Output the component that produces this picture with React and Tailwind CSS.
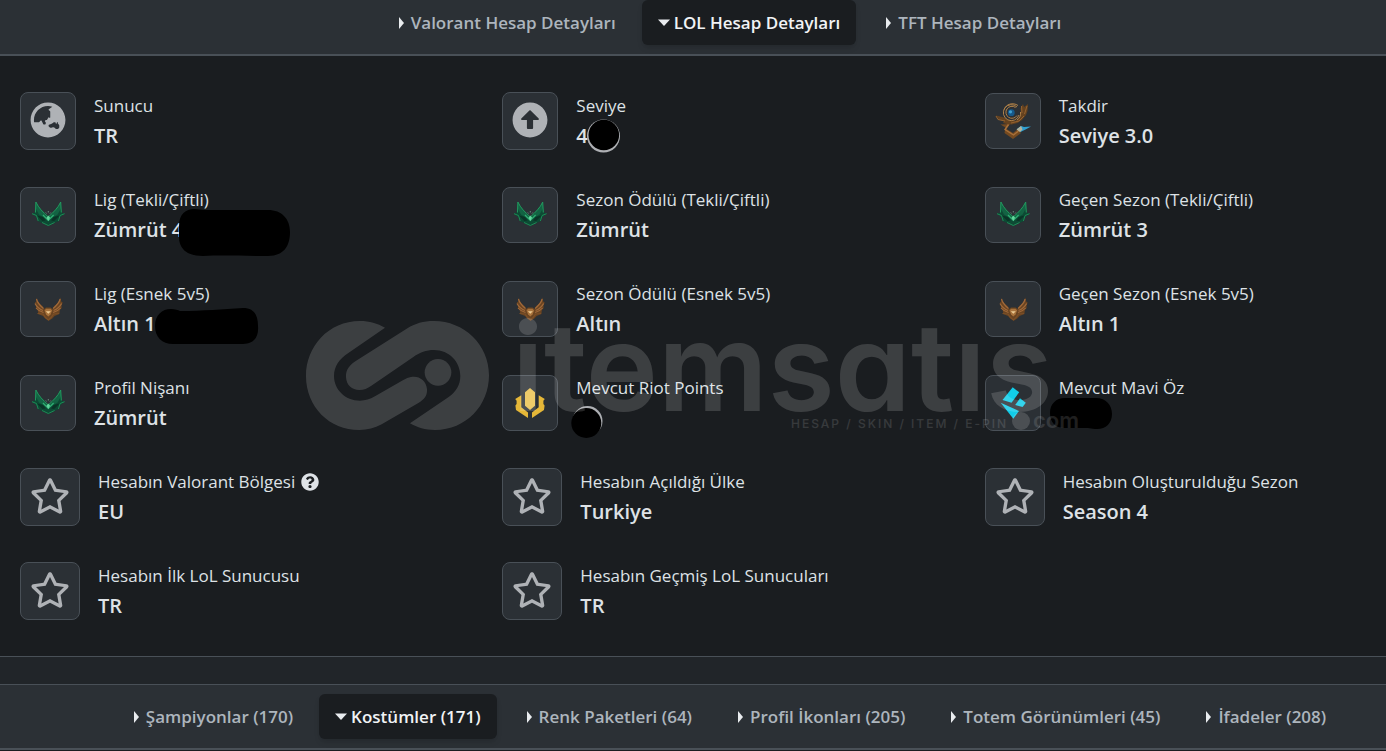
import React from "react";
import { FaGlobeAsia, FaArrowAltCircleUp, FaRegStar, FaQuestionCircle } from "react-icons/fa";

const accountTabs = [
  { label: "Valorant Hesap Detayları" },
  { label: "LOL Hesap Detayları", open: true },
  { label: "TFT Hesap Detayları" },
];

const inventoryTabs = [
  { label: "Şampiyonlar (170)" },
  { label: "Kostümler (171)", open: true },
  { label: "Renk Paketleri (64)" },
  { label: "Profil İkonları (205)" },
  { label: "Totem Görünümleri (45)" },
  { label: "İfadeler (208)" },
];

function Tab({ label, open }) {
  return (
    <button
      type="button"
      aria-expanded={!!open}
      className={
        "flex h-[45px] items-center whitespace-nowrap rounded-md px-4 text-[17px] font-semibold " +
        (open ? "bg-[#1a1d20] text-[#f1f3f5] shadow-md" : "text-[#adb5bd]")
      }
    >
      <svg className="mr-[2px] size-[14px] shrink-0 text-[#e9ecef]" viewBox="0 0 14 14" fill="currentColor" aria-hidden="true">
        {open ? <path d="M0 3.500h12L6 10z" /> : <path d="M4 1v12l5-6z" />}
      </svg>
      {label}
    </button>
  );
}

function Emerald() {
  return (
    <svg viewBox="0 0 36 36" className="size-9" aria-hidden="true">
      <path d="M5.900 5C8.500 11 13 15 18.300 19.500 23.600 15 28.100 11 30.700 5l1.200 10.500 2.600 1.200-4 3.300-2 4.200-5.200 2.200-5 2.600-5-2.600-5.200-2.200-2-4.200L2 16.700l2.700-1.200z" fill="#0d4a34" />
      <path d="M5.900 5C8.500 11 13 15 18.300 20.500l-2 1.500L9 17.500 5.500 11zM30.700 5C28.100 11 23.600 15 18.300 20.500l2 1.500 7.300-4.500 3.500-6.500z" fill="#136343" />
      <path d="M5.900 5C8.500 11 13 15 18.300 20 23.600 15 28.100 11 30.700 5M5.900 5l-.4 10.500M30.700 5l.6 10.500" fill="none" stroke="#229a5f" strokeWidth="1" />
      <path d="M2 16.700l4.500 1.800L8.200 24M34.600 16.700l-4.500 1.800-1.700 5.500M12 25.500l6.300 3 6.300-3" fill="none" stroke="#1d8a55" strokeWidth="1" />
      <path d="M7 18.500l6 1.500 2.500 3.500-3 .5zM29.600 18.500l-6 1.500-2.500 3.500 3 .5z" fill="#0a3326" />
      <path d="M13 18l5.300 5.500L23.600 18" fill="none" stroke="#2fb173" strokeWidth="1.200" />
      <path d="M18.300 18.500l1.800 2.200-1.800 3.300-1.800-3.300z" fill="#62d69c" />
      <path d="M15.800 15.500l.8 1M20.800 15.500l-.8 1M18.300 14v1.500" stroke="#7b9f93" strokeWidth=".8" />
    </svg>
  );
}

function Gold() {
  return (
    <svg viewBox="0 0 36 36" className="size-9" aria-hidden="true">
      <path d="M6 6.500c1 4 3.500 6.500 6.500 8.500l1.500 3 2-1.500h4.600l2 1.500 1.500-3c3-2 5.500-4.500 6.500-8.500l.6 4 1.500 1-1.200 3 .2 2.500-1.800 2-.5 4-4.800 2-2.300 2.500-3.500 2.300-3.500-2.300-2.300-2.500-4.800-2-.5-4-1.800-2 .2-2.500-1.200-3 1.500-1z" fill="#6a4421" />
      <path d="M6.500 8c1 4.500 4 7 7 9.500M30.100 8c-1 4.500-4 7-7 9.500M5 12.500c1.500 3 4.500 5.500 8 7M31.600 12.500c-1.500 3-4.500 5.500-8 7M6 17c2 2.500 4.500 3.500 7.500 4.500M30.600 17c-2 2.500-4.500 3.500-7.500 4.500" fill="none" stroke="#a0693a" strokeWidth="1.200" />
      <path d="M7.500 22.500l5.500.5 2.500 3.500 2.800 2.500 2.800-2.500 2.500-3.500 5.500-.5" fill="none" stroke="#7c4f27" strokeWidth="1.200" />
      <path d="M14.500 19.500l1.500-1.700h4.600l1.500 1.700-1.600 4-2.200 2-2.200-2z" fill="#a9733c" />
      <path d="M15.800 20.200h5l-2.500 2.600z" fill="#eccb93" />
    </svg>
  );
}

function Honor() {
  return (
    <svg viewBox="0 0 36 36" className="size-9" aria-hidden="true">
      <path d="M1 12.500l8 2 5 3 6 .5 4-2.500 2-5-.5-5L28 1l1 3 4-3-.5 7-1.500 4-4 5-4.500 3-6 1.500-5-.5L8 20l1-2-5-1.500z" fill="#65421f" />
      <path d="M1 13l2 3.500 7 1.500M26.500 3l.5 7M32 3l-2.500 8M29 13l-5 5-8 2" fill="none" stroke="#946230" strokeWidth="1" />
      <path d="M24 12a8 8 0 1 1-2-8M20.500 4.500a6 6 0 1 0 1.500 8M9 6.500C11 1 18-1 23 2.500M22 17c3-2 4-5 3.500-8" fill="none" stroke="#b08148" strokeWidth="1" />
      <circle cx="16.300" cy="9.700" r="3.400" fill="#15598b" />
      <circle cx="15.500" cy="8.800" r="1.600" fill="#3f9fd0" />
      <path d="M5.500 21.500l9.500-.5-3.500 5 6.500 4 5-4 3 4-8 6L9.500 30l1-5.500z" fill="#754a20" />
      <path d="M13.500 21.500l-3.500 5 8.500 5.500 5-4" fill="none" stroke="#a9713a" strokeWidth="1.400" />
      <path d="M22 26l4-3 3 1 7-.5-4.500 2.500-6 3z" fill="#2f9fd0" />
      <path d="M21.500 26.500l4.500-3.500 1.500 3.500-2.500 2.500z" fill="#b5b39b" />
    </svg>
  );
}

function RiotPoints() {
  return (
    <svg viewBox="0 0 36 36" className="size-9" fill="#e5b738" aria-hidden="true">
      <path d="M18 3l5 4.200v13.600L18 25l-5-4.200V7.200z" fill="#ebc250" />
      <path d="M9.300 10.300v11.900l6.700 5.300V33L4 25l-.6-4.500L4.600 19v-3.300L3.200 14zM26.700 10.300v11.900L20 27.500V33l12-8 .6-4.500-1.200-1.500v-3.300l1.400-1.700z" />
    </svg>
  );
}

function BlueEssence() {
  return (
    <svg viewBox="0 0 36 36" className="size-9" fill="#11cde9" aria-hidden="true">
      <path d="M17.700 2.300l6.500 5-7.700 10.400L7.500 15z" />
      <path d="M25 13.300l5.800 4.400-3.200 4.300-7.400-2z" />
      <path d="M5.700 17.700L24 26l-5.700 7.800z" />
    </svg>
  );
}

const Globe = () => <FaGlobeAsia className="size-9" />;
const Level = () => <FaArrowAltCircleUp className="size-9" />;
const Star = () => <FaRegStar className="h-9 w-10" />;

const LeagueMask = () => (
  <svg className="absolute left-[85px] top-6 h-12 w-28" viewBox="0 0 112 48" aria-hidden="true">
    <path d="M0 17C0 5 7 0 15 0c4 0 7 1 10 1h64c14 0 22 9 22 22 0 15-7 24-22 24-25 0-45-1-65 0C7 47 0 39 0 28z" />
  </svg>
);
const FlexMask = () => (
  <svg className="absolute left-[61px] top-[29px] h-[38px] w-[104px]" viewBox="0 0 104 38" aria-hidden="true">
    <path d="M0 18C0 7 7 1 16 1c4 0 7 1 9 2 24 0 42-2 63-3 11 0 15 7 15 18 1 12-5 18-15 18H18C7 36 0 29 0 18z" />
  </svg>
);
const LevelMask = () => (
  <svg className="absolute left-[10px] top-7 size-9" viewBox="0 0 36 36" aria-hidden="true">
    <circle cx="17.500" cy="17" r="16.500" fill="#aeb0b4" />
    <circle cx="17.800" cy="16" r="15.300" />
  </svg>
);
const PointsMask = () => (
  <svg className="absolute -left-[5px] top-8 size-9" viewBox="0 0 36 36" aria-hidden="true">
    <circle cx="16.500" cy="16" r="15" fill="#aeb0b4" />
    <circle cx="15.300" cy="18" r="15" />
  </svg>
);
const EssenceMask = () => (
  <svg className="absolute -left-[9px] top-[25px] h-8 w-[62px]" viewBox="0 0 62 32" aria-hidden="true">
    <path d="M15 0h31c10 0 16 7 16 16 0 10-7 16-17 15-3 0-5-1-7-1H15C5 30 0 24 0 15S6 0 15 0z" />
  </svg>
);

const details = [
  { label: "Sunucu", value: "TR", Icon: Globe, font: true },
  { label: "Seviye", value: "4", Icon: Level, font: true, Mask: LevelMask },
  { label: "Takdir", value: "Seviye 3.0", Icon: Honor },
  { label: "Lig (Tekli/Çiftli)", value: "Zümrüt 4", Icon: Emerald, Mask: LeagueMask },
  { label: "Sezon Ödülü (Tekli/Çiftli)", value: "Zümrüt", Icon: Emerald },
  { label: "Geçen Sezon (Tekli/Çiftli)", value: "Zümrüt 3", Icon: Emerald },
  { label: "Lig (Esnek 5v5)", value: "Altın 1", Icon: Gold, Mask: FlexMask },
  { label: "Sezon Ödülü (Esnek 5v5)", value: "Altın", Icon: Gold },
  { label: "Geçen Sezon (Esnek 5v5)", value: "Altın 1", Icon: Gold },
  { label: "Profil Nişanı", value: "Zümrüt", Icon: Emerald },
  { label: "Mevcut Riot Points", value: "", Icon: RiotPoints, Mask: PointsMask },
  { label: "Mevcut Mavi Öz", value: "", Icon: BlueEssence, Mask: EssenceMask },
  { label: "Hesabın Valorant Bölgesi", value: "EU", Icon: Star, font: true, help: true },
  { label: "Hesabın Açıldığı Ülke", value: "Turkiye", Icon: Star, font: true },
  { label: "Hesabın Oluşturulduğu Sezon", value: "Season 4", Icon: Star, font: true },
  { label: "Hesabın İlk LoL Sunucusu", value: "TR", Icon: Star, font: true },
  { label: "Hesabın Geçmiş LoL Sunucuları", value: "TR", Icon: Star, font: true },
];

function Detail({ label, value, Icon, font, Mask, help }) {
  return (
    <div className="flex h-[60px] items-center gap-[18px]">
      <div
        className={
          "shrink-0 rounded-lg border border-[#495057] bg-[#2b3035] px-[9px] pt-[9px] text-[#afb2b6] " +
          (font ? "pb-[11px]" : "pb-[9px]")
        }
      >
        <Icon />
      </div>
      <dl className="relative h-[60px] whitespace-nowrap">
        <dt className="flex items-center gap-[6px] text-[17px] leading-[30px] text-[#dee2e6]">
          {label}
          {help && (
            <button type="button" aria-label="Bilgi">
              <FaQuestionCircle className="size-[18px]" />
            </button>
          )}
        </dt>
        <dd className="text-[20px] font-semibold leading-[30px] text-[#dee2e6]">{value}</dd>
        {Mask && <Mask />}
      </dl>
    </div>
  );
}

function Watermark() {
  return (
    <svg
      className="pointer-events-none absolute left-[300px] top-[290px] h-[160px] w-[820px] overflow-visible opacity-15"
      viewBox="300 290 820 160"
      fill="#fff"
      aria-hidden="true"
    >
      <g transform="translate(290 300) scale(.33333)">
        <path d="M285 83C262 70 238 63 210 63 115 63 48 140 48 228c0 92 70 162 160 162 25 0 45-6 67-17l110-64c18-11 27-22 26-41-2-28-26-42-48-37-8 1-14 4-23 9l-85 49c-16 9-28 13-45 13-45 0-78-34-78-74 0-29 16-52 43-69z" />
        <path d="M360 370c22 13 46 20 75 20 93 0 162-73 162-164 0-93-76-163-165-163-32 0-56 7-82 23L202 180c-23 14-35 28-34 51 1 24 18 39 40 39 14 0 24-5 36-13l126-86c20-14 38-21 62-21 46 0 79 36 79 78 0 27-13 48-36 64z" />
        <circle cx="444" cy="217" r="40" />
      </g>
      <text
        x="512"
        y="411"
        className="text-[122px] font-semibold"
        style={{ fontFamily: 'Inter, sans-serif', fontFeatureSettings: '"cv11"' }}
      >
        itemsatıs
      </text>
      <circle cx="1021" cy="421" r="9" />
      <text x="791" y="428" className="text-[12px] font-medium tracking-[2px]" style={{ fontFamily: "Inter, sans-serif" }} opacity=".85">
        HESAP / SKIN / ITEM / E-PIN
      </text>
      <text x="1033" y="428" className="text-[22px] font-semibold" style={{ fontFamily: "Inter, sans-serif" }} opacity=".8">
        com
      </text>
    </svg>
  );
}

export default function App() {
  return (
    <div className="relative min-h-screen overflow-x-hidden bg-[#1a1d20] font-['Open_Sans','Noto_Sans',sans-serif]">
      <nav aria-label="Hesap detayları" className="flex justify-center gap-[10px] border-b-2 border-[#495057] bg-[#2b3035] pb-[9px] pl-[70px]">
        {accountTabs.map((t) => (
          <Tab key={t.label} {...t} />
        ))}
      </nav>
      <main className="grid grid-cols-3 gap-x-[101px] gap-y-[34px] px-5 py-[35px]">
        {details.map((d) => (
          <Detail key={d.label} {...d} />
        ))}
      </main>
      <div className="h-[29px] border-y border-[#495057] bg-[#212529]" />
      <nav aria-label="Envanter" className="flex justify-center gap-[10px] border-b-2 border-[#495057] bg-[#2b3035] py-[9px] pl-[70px]">
        {inventoryTabs.map((t) => (
          <Tab key={t.label} {...t} />
        ))}
      </nav>
      <Watermark />
    </div>
  );
}
